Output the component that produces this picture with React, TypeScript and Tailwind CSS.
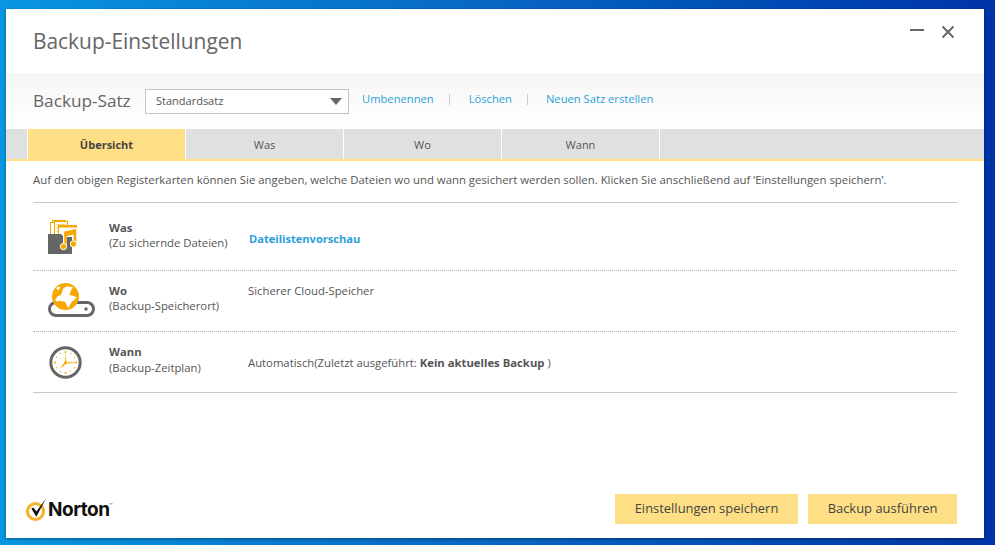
import React from 'react';

const FONT = "font-['Open_Sans','Noto_Sans',sans-serif]";

const FilesIcon = () => (
  <svg width="30" height="36" viewBox="0 0 30 36">
    <rect x="4.500" y="1.500" width="13" height="17" fill="#fff" stroke="#f5a800" />
    <rect x="2.500" y="3.500" width="13" height="17" fill="#fff" stroke="#f5a800" />
    <rect x="6.500" y="2.500" width="13" height="19" fill="#fff" stroke="#f5a800" />
    <path d="M8.500 6h9M8.500 9h9M8.500 12h9" stroke="#f5a800" strokeWidth="1" />
    <rect x="10.500" y="6.500" width="18" height="15" fill="#fff" stroke="#f5a800" />
    <rect x="10" y="6" width="19" height="2.500" fill="#f5a800" />
    <path d="M0 15h13l3 3h8v17H0z" fill="#666" />
    <path d="M17 27V13.500l10-2V25" fill="none" stroke="#fff" strokeWidth="4" />
    <path d="M17.500 27V14.500l9.500-2V25" fill="none" stroke="#f5a800" strokeWidth="2.500" />
    <path d="M16.500 12.500l11.500-2.500v5l-11.500 2.500z" fill="#f5a800" />
    <circle cx="15.500" cy="27.500" r="3.200" fill="#f5a800" stroke="#fff" />
    <circle cx="25.500" cy="25" r="3.200" fill="#f5a800" stroke="#fff" />
  </svg>
);

const CloudIcon = () => (
  <svg width="48" height="36" viewBox="0 0 48 36">
    <rect x="1.500" y="19.500" width="44" height="13" rx="6.500" fill="#fff" stroke="#666" strokeWidth="3" />
    <circle cx="38" cy="26" r="1.700" fill="#666" />
    <circle cx="17.500" cy="13.500" r="13.500" fill="#f5a800" />
    <path d="M7 17l3-4 3-1 2.300-6.700 4-2L25 4.300l-2 3-1.700 4.700 3 .500 4.400 1.700-2.700 3-2.300 1.500-3.400 6.600-3.300-6.600-3-.500-2.700-.500-2.300 1z" fill="#fff" />
    <path d="M8 5l3-1.500 1.500 1-2.500 3z" fill="#fff" />
  </svg>
);

const ClockIcon = () => {
  const marks = [0, 30, 60, 90, 120, 150, 180, 210, 240, 270, 300, 330];
  return (
    <svg width="33" height="33" viewBox="0 0 33 33">
      <circle cx="16.500" cy="16.500" r="14.700" fill="#fff" stroke="#666" strokeWidth="3" />
      {marks.map((a) => (
        <circle
          key={a}
          cx={16.5 + 10.5 * Math.sin((a * Math.PI) / 180)}
          cy={16.5 - 10.5 * Math.cos((a * Math.PI) / 180)}
          r={a % 90 === 0 ? 1 : 0.7}
          fill="#f5a800"
        />
      ))}
      <path d="M16.500 15.500l10 0.700v.800l-10 1z" fill="#f8c860" />
      <path d="M17 16.500L17 5.500l-1.200 11z" fill="#f5a800" />
      <path d="M17.500 17.500l-7 5.500 5.500-7z" fill="#f5a800" />
      <circle cx="16.500" cy="16.500" r="1.200" fill="#f5a800" />
    </svg>
  );
};

const NortonCheck = () => (
  <svg width="24" height="25" viewBox="0 0 24 25">
    <circle cx="11.500" cy="14.500" r="8" fill="#fff" stroke="#f7b32b" strokeWidth="3.200" />
    <path d="M7.500 11.500l4.500 3.500L22 1.500 12.500 19.500z" fill="#111" />
    <path d="M7.500 11.500l1.800-1 3.200 4-.200 5z" fill="#111" />
  </svg>
);

const tabs = ['Was', 'Wo', 'Wann'];

const rows = [
  { icon: <FilesIcon />, title: 'Was', sub: '(Zu sichernde Dateien)', h: 'h-[68px]', pad: 'pl-[15px]', label: 'pb-[4px] leading-[15px]' },
  { icon: <CloudIcon />, title: 'Wo', sub: '(Backup-Speicherort)', h: 'h-[61px]', pad: 'pl-[15px]', label: 'pb-[6px] leading-[15px]' },
  { icon: <ClockIcon />, title: 'Wann', sub: '(Backup-Zeitplan)', h: 'h-[60px]', pad: 'pl-[16px]', label: 'pb-[4px] leading-[16px]' },
];

export default function App() {
  return (
    <div className={`${FONT} w-[995px] h-[545px] overflow-hidden bg-linear-to-r from-[#0a96e0] via-[#0a66c4] to-[#0033a8] pt-[9px] pl-[6px]`}>
      <div className="w-[978px] h-[529px] bg-white flex flex-col text-[#555] shadow-[0_1px_3px_rgba(0,0,0,0.4)]">
        {/* Title */}
        <div className="h-[64px] shrink-0 flex justify-between pl-[27px] pr-[29px]">
          <h1 className="text-[20.9px] leading-[64px] text-[#666]">Backup-Einstellungen</h1>
          <div className="flex items-start gap-[16px] pt-[15px]">
            <svg width="15" height="16" viewBox="0 0 15 16"><path d="M0 6h14" stroke="#666" strokeWidth="2" /></svg>
            <svg width="14" height="16" viewBox="0 0 14 16"><path d="M1.500 2.500l11 11M12.500 2.500l-11 11" stroke="#666" strokeWidth="2" /></svg>
          </div>
        </div>

        {/* Backup-Satz */}
        <div className="h-[56px] shrink-0 bg-linear-to-b from-[#f6f6f6] to-white flex items-start pl-[27px] pt-[16px]">
          <span className="text-[17.2px] leading-[24px] text-[#666] w-[112px] whitespace-nowrap">Backup-Satz</span>
          <div className="w-[204px] h-[25px] border border-[#c4c4c4] bg-white flex items-center justify-between pl-[10px] pr-[6px] text-[11px] text-[#555]">
            Standardsatz
            <svg width="12" height="7" viewBox="0 0 12 7"><path d="M0 0h12L6 7z" fill="#666" /></svg>
          </div>
          <div className="flex text-[11.2px] leading-[20px] text-[#2ba0d8] ml-[13px]">
            <span>Umbenennen</span>
            <span className="w-px h-[11px] bg-[#ccc] mt-[5px] ml-[15px] mr-[19px]" />
            <span>Löschen</span>
            <span className="w-px h-[11px] bg-[#ccc] mt-[5px] ml-[15px] mr-[18px]" />
            <span>Neuen Satz erstellen</span>
          </div>
        </div>

        {/* Tabs */}
        <div className="h-[32px] shrink-0 flex bg-[#e0e0e0] border-b-2 border-[#ffe084] text-[11px] leading-[32px]">
          <div className="w-[22px] border-r border-white" />
          <div className="w-[158px] bg-[#ffdf85] border-r border-white text-center font-bold text-[#444]">Übersicht</div>
          {tabs.map((t) => (
            <div key={t} className="w-[158px] border-r border-white text-center text-[#555]">{t}</div>
          ))}
        </div>

        {/* Content */}
        <div className="px-[27px] flex-1">
          <p className="text-[11.38px] leading-[14px] text-[#555] h-[41px] pt-[12px] whitespace-nowrap">
            Auf den obigen Registerkarten können Sie angeben, welche Dateien wo und wann gesichert werden sollen. Klicken Sie anschließend auf ‘Einstellungen speichern’.
          </p>
          <div className="border-t border-[#c8c8c8] border-b">
            {rows.map((r, i) => (
              <div key={r.title} className={`${r.h} flex items-center ${i < 2 ? 'border-b border-dotted border-[#b0b0b0]' : ''}`}>
                <div className={`w-[76px] shrink-0 ${r.pad}`}>{r.icon}</div>
                <div className={`w-[139px] shrink-0 text-[11.3px] ${r.label}`}>
                  <div className="font-bold">{r.title}</div>
                  <div>{r.sub}</div>
                </div>
                <div className="text-[11.3px]">
                  {i === 0 && <div className="font-bold text-[11.1px] text-[#2ba0d8] ml-px mt-[5px]">Dateilistenvorschau</div>}
                  {i === 1 && <div className="mb-[20px]">Sicherer Cloud-Speicher</div>}
                  {i === 2 && (
                    <div className="mt-[3px]">
                      Automatisch(Zuletzt ausgeführt: <b>Kein aktuelles Backup</b> )
                    </div>
                  )}
                </div>
              </div>
            ))}
          </div>
        </div>

        {/* Footer */}
        <div className="h-[44px] shrink-0 flex justify-between items-start pl-[18px] pr-[27px]">
          <div className="flex items-end mt-[3px]">
            <NortonCheck />
            <span className="font-['Inter',sans-serif] font-bold text-[19px] leading-[24px] text-[#111] tracking-[-0.5px]">Norton</span>
            <span className="text-[4px] leading-[4px] text-[#555] self-start mt-[6px]">™</span>
          </div>
          <div className="flex gap-[10px]">
            <button className="w-[183px] h-[30px] bg-[#ffdf85] text-[12.95px] text-[#444]">Einstellungen speichern</button>
            <button className="w-[149px] h-[30px] bg-[#ffdf85] text-[12.95px] text-[#444]">Backup ausführen</button>
          </div>
        </div>
      </div>
    </div>
  );
}
